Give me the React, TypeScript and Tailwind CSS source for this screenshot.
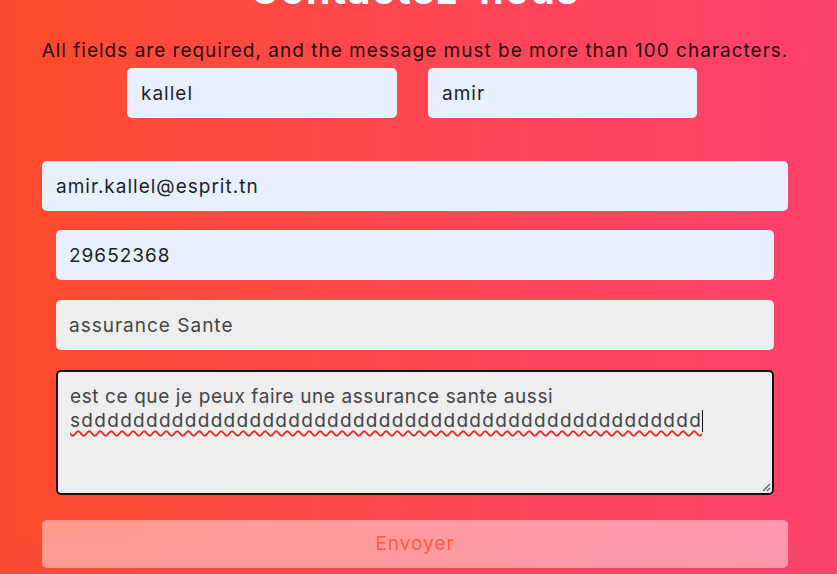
import React from 'react';

const font = { fontFamily: 'Inter, "Open Sans", sans-serif' };

export default function App() {
  const dees = 's' + 'd'.repeat(48);

  return (
    <div
      className="h-[574px] w-[837px] overflow-hidden bg-gradient-to-r from-[#fb4a30] to-[#f8446c] pl-[16px] pr-[23px]"
      style={{ fontFamily: 'Inter, "Open Sans", sans-serif' }}
    >
      <div className="h-full bg-gradient-to-r from-[#ff4b2b] to-[#ff416c]">
        {/* title is scrolled up out of view */}
        <h1 className="-mt-[32px] text-center text-[39px] font-bold leading-[44px] tracking-[1.5px] text-white">
          Contactez-nous
        </h1>

        <p className="mt-[27px] text-center text-[19px] leading-[24px] tracking-[1px] text-[#1c1010]">
          All fields are required, and the message must be more than 100 characters.
        </p>

        <div className="mt-[5px] flex gap-[31px] pl-[111px]">
          <input
            readOnly
            value="kallel"
            className="h-[50px] w-[270px] rounded-[5px] bg-[#e8f0fe] px-[14px] text-[19px] tracking-[1px] text-[#1e1e1e] outline-none"
            style={font}
          />
          <input
            readOnly
            value="amir"
            className="h-[50px] w-[269px] rounded-[5px] bg-[#e8f0fe] px-[14px] text-[19px] tracking-[1px] text-[#1e1e1e] outline-none"
            style={font}
          />
        </div>

        <div className="mx-[26px] mt-[43px]">
          <input
            readOnly
            value="amir.kallel@esprit.tn"
            className="block h-[50px] w-full rounded-[5px] bg-[#e8f0fe] px-[14px] text-[19px] tracking-[1px] text-[#1e1e1e] outline-none"
            style={font}
          />
        </div>

        <div className="mx-[40px] mt-[19px] flex flex-col gap-[20px]">
          <input
            readOnly
            value="29652368"
            className="block h-[50px] w-full rounded-[5px] bg-[#e8f0fe] px-[13px] text-[19px] tracking-[1px] text-[#1e1e1e] outline-none"
            style={font}
          />
          <input
            readOnly
            value="assurance Sante"
            className="block h-[50px] w-full rounded-[5px] bg-[#eeeeee] px-[13px] text-[19px] tracking-[1px] text-[#444] outline-none"
            style={font}
          />

          {/* message box, focused with spellcheck marks */}
          <div className="relative h-[125px] w-full rounded-[5px] border-2 border-[#111] bg-[#eeeeee] px-[12px] pt-[13px] text-[19px] leading-[24px] text-[#444]">
            <div className="tracking-[0.6px]">est ce que je peux faire une assurance sante aussi</div>
            <div className="flex items-center">
              <span className="tracking-[1.3px] underline decoration-[#e0302a] decoration-wavy decoration-[1.5px] underline-offset-[3px]">
                {dees}
              </span>
              <span className="h-[22px] w-px bg-[#111]" />
            </div>
            <svg
              className="absolute bottom-[1px] right-[1px]"
              width="10"
              height="10"
              viewBox="0 0 10 10"
            >
              <path d="M9 2 L2 9 M9 6 L6 9" stroke="#555" strokeWidth="1.2" />
            </svg>
          </div>
        </div>

        <div className="mx-[26px] mt-[25px]">
          <button className="h-[48px] w-full rounded-[5px] bg-white/45 text-[19px] tracking-[1px] text-[#ff5b45]">
            Envoyer
          </button>
        </div>
      </div>
    </div>
  );
}
